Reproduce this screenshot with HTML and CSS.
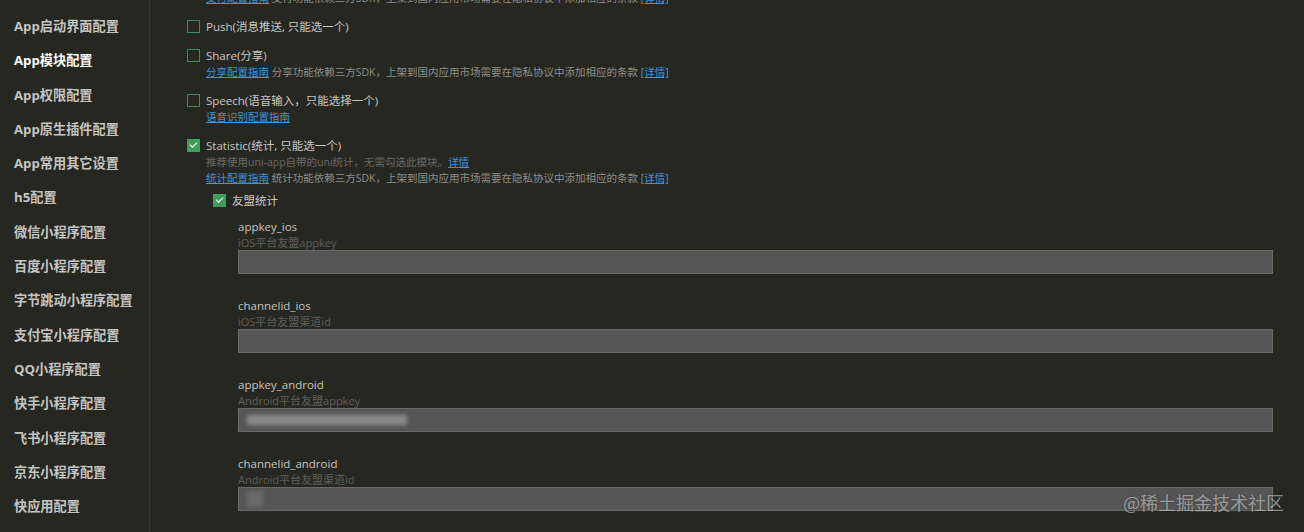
FILE: index.html
```html
<!DOCTYPE html>
<html lang="zh-CN">
<head>
    <meta charset="UTF-8">
    <title>manifest.json</title>
    <link rel="stylesheet" href="styles.css">
</head>
<body>
    <div class="layout">
        <!-- Left menu -->
        <nav class="sidebar">
            <div class="nav-item">App启动界面配置</div>
            <div class="nav-item active">App模块配置</div>
            <div class="nav-item">App权限配置</div>
            <div class="nav-item">App原生插件配置</div>
            <div class="nav-item">App常用其它设置</div>
            <div class="nav-item">h5配置</div>
            <div class="nav-item">微信小程序配置</div>
            <div class="nav-item">百度小程序配置</div>
            <div class="nav-item">字节跳动小程序配置</div>
            <div class="nav-item">支付宝小程序配置</div>
            <div class="nav-item">QQ小程序配置</div>
            <div class="nav-item">快手小程序配置</div>
            <div class="nav-item">飞书小程序配置</div>
            <div class="nav-item">京东小程序配置</div>
            <div class="nav-item">快应用配置</div>
        </nav>

        <!-- Module list -->
        <main class="content">
            <div class="option first">
                <span class="checkbox"></span>
                <div class="option-body">
                    <div class="option-label">Payment(支付)</div>
                    <div class="note"><a href="#">支付配置指南</a> 支付功能依赖三方SDK，上架到国内应用市场需要在隐私协议中添加相应的条款 <a href="#">[详情]</a></div>
                </div>
            </div>

            <div class="option">
                <span class="checkbox"></span>
                <div class="option-body">
                    <div class="option-label">Push(消息推送, 只能选一个)</div>
                </div>
            </div>

            <div class="option">
                <span class="checkbox"></span>
                <div class="option-body">
                    <div class="option-label">Share(分享)</div>
                    <div class="note"><a href="#">分享配置指南</a> 分享功能依赖三方SDK，上架到国内应用市场需要在隐私协议中添加相应的条款 <a href="#">[详情]</a></div>
                </div>
            </div>

            <div class="option">
                <span class="checkbox"></span>
                <div class="option-body">
                    <div class="option-label">Speech(语音输入，只能选择一个)</div>
                    <div class="note"><a href="#">语音识别配置指南</a></div>
                </div>
            </div>

            <div class="option">
                <span class="checkbox checked"></span>
                <div class="option-body">
                    <div class="option-label">Statistic(统计, 只能选一个)</div>
                    <div class="hint">推荐使用uni-app自带的uni统计，无需勾选此模块。<a href="#">详情</a></div>
                    <div class="note"><a href="#">统计配置指南</a> 统计功能依赖三方SDK，上架到国内应用市场需要在隐私协议中添加相应的条款 <a href="#">[详情]</a></div>
                </div>
            </div>

            <div class="sub-option">
                <span class="checkbox checked"></span>
                <div class="option-label">友盟统计</div>
            </div>

            <div class="fields">
                <div class="field">
                    <div class="field-name">appkey_ios</div>
                    <div class="field-desc">iOS平台友盟appkey</div>
                    <div class="field-input"></div>
                </div>
                <div class="field">
                    <div class="field-name">channelid_ios</div>
                    <div class="field-desc">iOS平台友盟渠道id</div>
                    <div class="field-input"></div>
                </div>
                <div class="field">
                    <div class="field-name">appkey_android</div>
                    <div class="field-desc">Android平台友盟appkey</div>
                    <div class="field-input"><span class="smudge long"></span></div>
                </div>
                <div class="field">
                    <div class="field-name">channelid_android</div>
                    <div class="field-desc">Android平台友盟渠道id</div>
                    <div class="field-input"><span class="smudge short"></span></div>
                </div>
            </div>
        </main>
    </div>

    <div class="watermark">@稀土掘金技术社区</div>
</body>
</html>
```

FILE: styles.css
```css
html, body {
    margin: 0;
    padding: 0;
    height: 100%;
    overflow: hidden;
}

body {
    font-family: "Open Sans", "Noto Sans CJK SC", sans-serif;
    background-color: #272722;
    color: #c8c8c3;
    position: relative;
}

.layout {
    display: flex;
    height: 100%;
}

/* Sidebar */
.sidebar {
    width: 150px;
    flex-shrink: 0;
    border-right: 1px solid #35352f;
    padding-top: 9px;
    box-sizing: border-box;
}

.nav-item {
    height: 34.3px;
    line-height: 34.3px;
    padding-left: 14px;
    font-size: 13.2px;
    font-weight: bold;
    color: #c4c4c0;
    white-space: nowrap;
}

.nav-item.active {
    color: #ffffff;
}

/* Main */
.content {
    flex: 1;
    padding: 0 31px 0 37px;
    font-size: 11.5px;
    line-height: 16px;
}

.option {
    display: flex;
    gap: 6px;
    margin-bottom: 13px;
}

.option.first {
    margin-top: -26px;
}

.checkbox {
    width: 11px;
    height: 11px;
    border: 1px solid #3f8a58;
    flex-shrink: 0;
    margin-top: 1px;
    position: relative;
}

.checkbox.checked {
    background-color: #3e9f5d;
    border-color: #3e9f5d;
}

.checkbox.checked::after {
    content: "";
    position: absolute;
    left: 2px;
    top: 2px;
    width: 6px;
    height: 3px;
    border-left: 1.5px solid #ffffff;
    border-bottom: 1.5px solid #ffffff;
    transform: rotate(-45deg);
}

.option-label {
    color: #c8c8c3;
    white-space: nowrap;
}

.note {
    font-size: 10.5px;
    color: #8e8e89;
    white-space: nowrap;
}

.hint {
    font-size: 10.5px;
    color: #6a6a65;
    white-space: nowrap;
}

a {
    color: #3d95dc;
    text-decoration: underline;
}

.sub-option {
    display: flex;
    gap: 6px;
    margin: -6px 0 0 26px;
}

.fields {
    margin: 10px 0 0 51px;
}

.field {
    margin-bottom: 24px;
}

.field-name {
    font-size: 11.5px;
    color: #c4c4bf;
}

.field-desc {
    font-size: 11px;
    line-height: 15px;
    color: #5f5f5a;
}

.field-input {
    height: 22px;
    background-color: #555555;
    border: 1px solid #6a6a68;
    overflow: hidden;
}

.smudge {
    display: inline-block;
    height: 10px;
    margin: 6px 0 0 8px;
    background-color: #8b8b8b;
    filter: blur(2px);
}

.smudge.long {
    width: 160px;
}

.smudge.short {
    width: 16px;
    height: 16px;
    margin-top: 3px;
    background-color: #6a6a6a;
}

.watermark {
    position: absolute;
    right: 20px;
    bottom: 17px;
    font-size: 18px;
    color: rgba(235, 235, 235, 0.55);
    font-family: "Noto Sans CJK SC", sans-serif;
    text-shadow: 0 0 2px rgba(0, 0, 0, 0.4);
}
```
